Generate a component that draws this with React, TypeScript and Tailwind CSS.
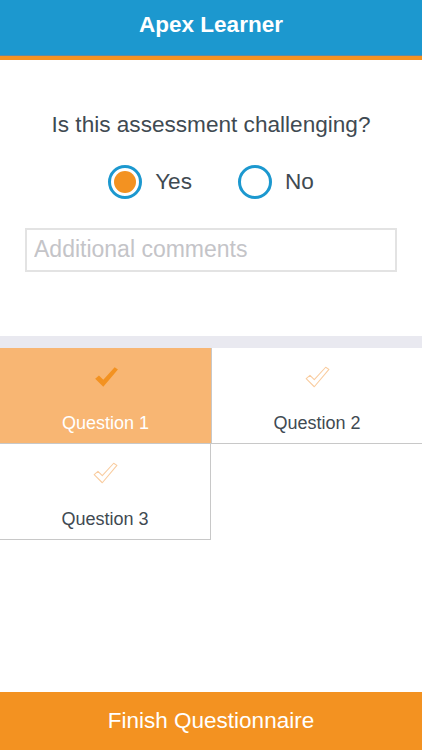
import React from "react";

const CHECK = "M2 13.5 L5.5 10.5 L9.5 14.5 L20 3 L23 5 L9.5 21 Z";

function Check({ filled }: { filled: boolean }) {
  return (
    <svg width="26" height="26" viewBox="0 0 24 24">
      {filled ? (
        <path d={CHECK} fill="#f39221" />
      ) : (
        <path d={CHECK} fill="none" stroke="#f9cc9f" strokeWidth="1" strokeLinejoin="round" />
      )}
    </svg>
  );
}

function QuestionCell({ label, active }: { label: string; active?: boolean }) {
  return (
    <div
      className={`flex h-[95px] flex-col items-center justify-center gap-[24px] pt-[6px] ${
        active ? "bg-[#f8b673] text-white" : "bg-white text-[#3f4a52]"
      }`}
    >
      <Check filled={!!active} />
      <span className="text-[18px] leading-none">{label}</span>
    </div>
  );
}

export default function App() {
  return (
    <div className="flex h-[750px] w-[422px] flex-col bg-white font-['Liberation_Sans',Arial,sans-serif] text-[#3f4a52]">
      {/* header */}
      <header className="flex h-[55px] items-center justify-center bg-[#1c98cf] pb-[6px]">
        <h1 className="text-[22.5px] font-bold text-white">Apex Learner</h1>
      </header>
      <div className="h-px bg-[#5f8aa0]" />
      <div className="h-[4px] bg-[#f39221]" />

      {/* question */}
      <section className="flex flex-col items-center pt-[54px]">
        <p className="text-[22.6px] leading-none">Is this assessment challenging?</p>
        <div className="mt-[28px] flex items-center gap-[46px]">
          <label className="flex items-center gap-[13px]">
            <span className="flex h-[34px] w-[34px] items-center justify-center rounded-full border-[3px] border-[#1c98cf]">
              <span className="h-[22px] w-[22px] rounded-full bg-[#f39221]" />
            </span>
            <span className="text-[22.6px]">Yes</span>
          </label>
          <label className="flex items-center gap-[13px]">
            <span className="h-[34px] w-[34px] rounded-full border-[3px] border-[#1c98cf]" />
            <span className="text-[22.6px]">No</span>
          </label>
        </div>
        <input
          placeholder="Additional comments"
          className="mt-[29px] h-[44px] w-[372px] border-2 border-[#e3e3e3] px-[7px] text-[23px] placeholder:text-[#c4c4c8] outline-none"
        />
      </section>

      {/* questions grid */}
      <div className="mt-[64px] h-[12px] bg-[#e9e9f0]" />
      <div className="grid grid-cols-2">
        <div className="border-b border-[#c8c8c8]">
          <QuestionCell label="Question 1" active />
        </div>
        <div className="border-b border-l border-[#c8c8c8]">
          <QuestionCell label="Question 2" />
        </div>
        <div className="border-b border-r border-[#c8c8c8]">
          <QuestionCell label="Question 3" />
        </div>
      </div>

      <div className="flex-1" />
      <button className="h-[58px] w-full bg-[#f39221] text-[22.5px] text-white">Finish Questionnaire</button>
    </div>
  );
}
